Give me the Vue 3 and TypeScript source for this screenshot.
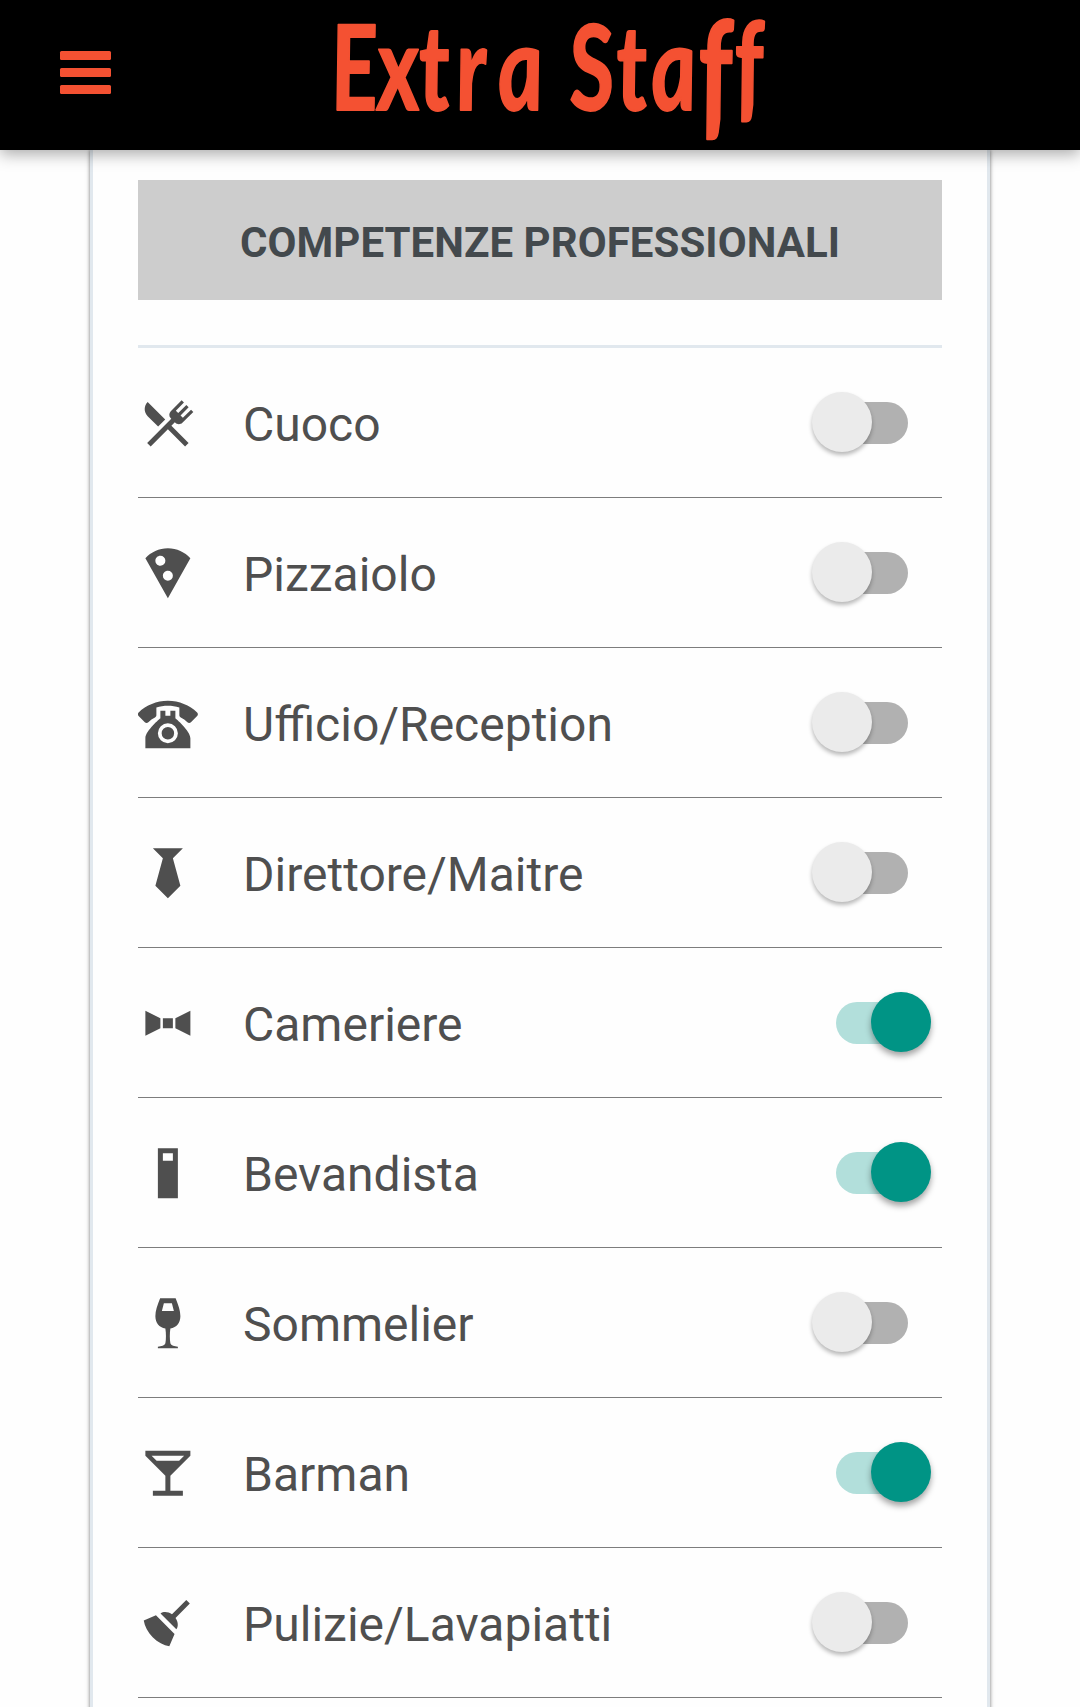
<script setup lang="ts">
import { ref } from 'vue'

interface Skill {
  name: string
  icon: string
  active: boolean
}

const skills = ref<Skill[]>([
  {
    name: 'Cuoco',
    icon: 'M8.1,13.34L3.91,9.16C2.35,7.59 2.35,5.06 3.91,3.5L10.93,10.5L8.1,13.34M13.41,13L20.29,19.88L18.88,21.29L12,14.41L5.12,21.29L3.71,19.88L13.36,10.22L13.16,10C12.38,9.23 12.38,7.97 13.16,7.19L17.5,2.82L18.43,3.74L15.19,7L16.15,7.94L19.39,4.69L20.31,5.61L17.06,8.85L18,9.81L21.26,6.56L22.18,7.5L17.81,11.84C17.03,12.62 15.77,12.62 15,11.84L14.78,11.64L13.41,13Z',
    active: false,
  },
  {
    name: 'Pizzaiolo',
    icon: 'M12,15A2,2 0 0,1 10,13C10,11.89 10.9,11 12,11A2,2 0 0,1 14,13A2,2 0 0,1 12,15M7,7C7,5.89 7.89,5 9,5A2,2 0 0,1 11,7A2,2 0 0,1 9,9C7.89,9 7,8.1 7,7M12,2C8.43,2 5.23,3.54 3,6L12,22L21,6C18.78,3.54 15.57,2 12,2Z',
    active: false,
  },
  {
    name: 'Ufficio/Reception',
    icon: 'M12,3C7.46,3 3.34,4.78 0.29,7.67C0.11,7.85 0,8.1 0,8.38C0,8.66 0.11,8.91 0.29,9.09L2.77,11.57C2.95,11.75 3.2,11.86 3.5,11.86C3.75,11.86 4,11.75 4.18,11.58C4.97,10.84 5.87,10.22 6.84,9.73C7.17,9.57 7.4,9.23 7.4,8.83V5.73C8.85,5.25 10.39,5 12,5C13.59,5 15.14,5.25 16.59,5.72V8.82C16.59,9.21 16.82,9.56 17.16,9.72C18.13,10.21 19,10.84 19.82,11.57C20,11.75 20.25,11.85 20.5,11.85C20.8,11.85 21.05,11.74 21.23,11.56L23.71,9.08C23.89,8.9 24,8.65 24,8.37C24,8.09 23.88,7.85 23.7,7.67C20.65,4.78 16.53,3 12,3M9,7V10C9,10 3,15 3,18V22H21V18C21,15 15,10 15,10V7H13V9H11V7H9M12,12A4,4 0 0,1 16,16A4,4 0 0,1 12,20A4,4 0 0,1 8,16A4,4 0 0,1 12,12M12,13.5A2.5,2.5 0 0,0 9.5,16A2.5,2.5 0 0,0 12,18.5A2.5,2.5 0 0,0 14.5,16A2.5,2.5 0 0,0 12,13.5Z',
    active: false,
  },
  {
    name: 'Direttore/Maitre',
    icon: 'M6,2L10,6L7,17L12,22L17,17L14,6L18,2Z',
    active: false,
  },
  {
    name: 'Cameriere',
    icon: 'M15,14L21,17V7L15,10V14M9,14L3,17V7L9,10V14M10,10H14V14H10V10Z',
    active: true,
  },
  {
    name: 'Bevandista',
    icon: 'M8,2H16V22H8V2M10,4V7H14V4H10Z',
    active: true,
  },
  {
    name: 'Sommelier',
    icon: 'M8.9,2H15.1C16.2,4.8 17,7 17,9.2C17,11.8 15.5,13.7 13,14.1C12.7,16 12.7,18.5 13,20C13.3,21 14.6,21.1 16,21.4V22H8V21.4C9.4,21.1 10.7,21 11,20C11.3,18.5 11.3,16 11,14.1C8.5,13.7 7,11.8 7,9.2C7,7 7.8,4.8 8.9,2M10.4,4L9.6,7.1H14.4L13.6,4H10.4Z',
    active: false,
  },
  {
    name: 'Barman',
    icon: 'M7.5,7L5.5,5H18.5L16.5,7M11,13V19H6V21H18V19H13V13L21,5V3H3V5L11,13Z',
    active: true,
  },
  {
    name: 'Pulizie/Lavapiatti',
    icon: 'M19.36,2.72L20.78,4.14L15.06,9.85C16.13,11.39 16.28,13.24 15.38,14.44L9.06,8.12C10.26,7.22 12.11,7.37 13.65,8.44L19.36,2.72M5.93,17.57C3.92,15.56 2.69,13.16 2.35,10.92L7.23,8.83L14.67,16.27L12.58,21.15C10.34,20.81 7.94,19.58 5.93,17.57Z',
    active: false,
  },
])
</script>

<template>
  <div class="screen">
    <header class="topbar">
      <button class="menu" aria-label="Menu">
        <span></span>
        <span></span>
        <span></span>
      </button>
      <svg class="brand" viewBox="0 0 440 150" role="img" aria-label="Extra Staff">
        <g transform="translate(0 110) scale(0.74 1) skewX(6)">
          <text class="wordmark" y="0">
            <tspan x="5">E</tspan><tspan x="67">x</tspan><tspan x="124">t</tspan><tspan x="174">r</tspan><tspan x="230">a</tspan>
            <tspan x="327">S</tspan><tspan x="391">t</tspan><tspan x="437">a</tspan><tspan class="swash" x="501" y="12">f</tspan><tspan class="small" x="551" y="-3">f</tspan>
          </text>
        </g>
      </svg>
    </header>

    <main class="card">
      <h1 class="title">COMPETENZE PROFESSIONALI</h1>
      <ul class="skills">
        <li v-for="skill in skills" :key="skill.name" class="skill">
          <svg class="icon" viewBox="0.05 -0.1 24 24"><path :d="skill.icon" fill-rule="evenodd" /></svg>
          <span class="name">{{ skill.name }}</span>
          <button
            class="switch"
            :class="{ on: skill.active }"
            role="switch"
            :aria-checked="skill.active"
            :aria-label="skill.name"
            @click="skill.active = !skill.active"
          >
            <span class="thumb"></span>
          </button>
        </li>
      </ul>
    </main>
  </div>
</template>

<style>
body {
  background: #fefefe;
}
</style>

<style scoped>
.screen {
  box-sizing: border-box;
  height: 1707px;
  overflow: hidden;
  display: flex;
  flex-direction: column;
  background: #fefefe;
  font-family: Roboto, 'Liberation Sans', sans-serif;
}

.topbar {
  position: relative;
  z-index: 1;
  flex: none;
  height: 150px;
  display: flex;
  background: #000;
  box-shadow: 0 4px 15px rgba(0, 0, 0, 0.34);
}

.menu {
  width: 51px;
  margin: 51px 219px 0 60px;
  padding: 0;
  border: 0;
  background: none;
  display: flex;
  flex-direction: column;
  gap: 8px;
}

.menu span {
  height: 9px;
  border-radius: 1.5px;
  background: #f45132;
}

.brand {
  width: 440px;
  height: 150px;
  overflow: visible;
}

.wordmark {
  font-family: Lato, 'Liberation Sans', sans-serif;
  font-size: 118px;
  font-weight: 700;
  font-style: italic;
  fill: #f45132;
  stroke: #f45132;
  stroke-width: 2px;
  stroke-linejoin: round;
}

.swash {
  font-size: 140px;
}

.small {
  font-size: 118px;
}

.card {
  box-sizing: border-box;
  flex: none;
  width: 900px;
  height: 1800px;
  margin: 0 90px;
  padding: 30px 45px 0;
  border: solid #e1e8ee;
  border-width: 0 3px;
  box-shadow: 0 0 4px rgba(0, 0, 0, 0.55);
}

.title {
  height: 120px;
  margin: 0 0 45px;
  background: #cdcdcd;
  color: #43494d;
  font-size: 42px;
  font-weight: 700;
  line-height: 126px;
  letter-spacing: 0.05px;
  text-align: center;
  white-space: nowrap;
}

.skills {
  list-style: none;
  margin: 0;
  padding: 0;
  border-top: 3px solid #e1e8ee;
}

.skill {
  box-sizing: border-box;
  height: 150px;
  display: flex;
  align-items: flex-start;
  border-bottom: 1px solid #7d7d7d;
}

.icon {
  width: 60px;
  height: 60px;
  margin: 45px 45px 0 0;
  fill: #4f4f4f;
}

.name {
  flex: 1;
  margin-top: 49px;
  color: #4f4f4f;
  font-size: 48px;
  line-height: 56px;
}

.switch {
  display: flex;
  align-items: flex-start;
  width: 72px;
  height: 42px;
  margin: 54px 34px 0 0;
  padding: 0;
  border: 0;
  border-radius: 21px;
  background: #b1b1b1;
}

.thumb {
  flex: none;
  width: 60px;
  height: 60px;
  margin: -9.7px 0 0 -23.6px;
  border-radius: 50%;
  background: #ebebeb;
  box-shadow: 0 3px 4px rgba(0, 0, 0, 0.28);
}

.switch.on {
  background: #b2dfdb;
}

.switch.on .thumb {
  margin-left: 35.4px;
  background: #009485;
  box-shadow: 0 4px 6px rgba(0, 0, 0, 0.36);
}
</style>
